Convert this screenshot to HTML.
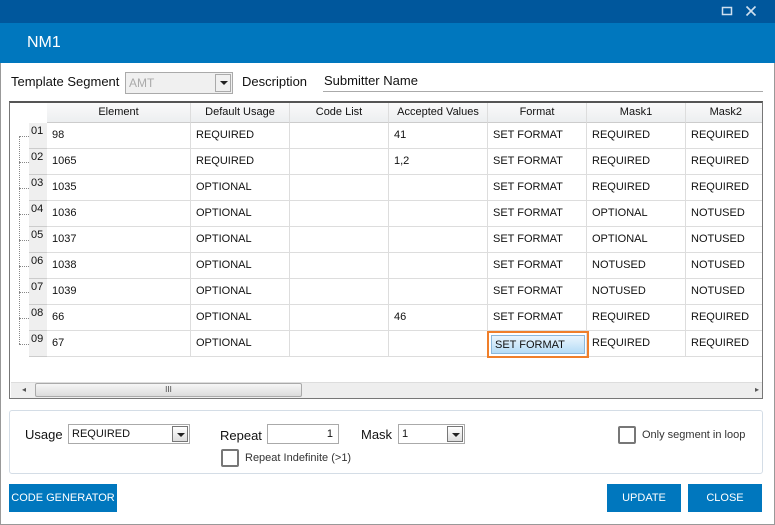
<!DOCTYPE html>
<html><head><style>
*{margin:0;padding:0;box-sizing:border-box}
body{width:775px;height:525px;overflow:hidden;background:#fff;font-family:"Liberation Sans",Tahoma,sans-serif;font-size:12px;color:#111;position:relative}
.a{position:absolute}
.t1{left:0;top:0;width:775px;height:23px;background:#00579c}
.t2{left:0;top:23px;width:775px;height:40px;background:#0077be;color:#fff;font-size:16px;padding:11px 0 0 27px}
.frame{left:0;top:63px;width:775px;height:462px;border:1px solid #999;border-top:none}
.cell{position:absolute;height:26px;border-right:1px solid #ddd;border-bottom:1px solid #ddd;font-size:11px;padding:6px 0 0 5px;white-space:nowrap}
.hd{position:absolute;top:103px;height:20px;background:linear-gradient(#fafafa,#eceef0);border-right:1px solid #ddd;border-bottom:1px solid #ccc;font-size:11px;text-align:center;padding-top:3px}
.rn{position:absolute;left:29px;width:18px;height:26px;background:#efefef;border-bottom:1px solid #ccc;font-size:11px;padding:2px 0 0 2px}
.btn{position:absolute;background:#0077be;color:#fff;font-size:11px;text-align:center;line-height:28px;height:28px}
.sel{position:absolute;border:1px solid #aaa;background:#fff;height:20px;font-size:11px;padding:3px 0 0 3px}
.dd{position:absolute;right:1px;top:1px;width:16px;height:16px;border:1px solid #777;background:linear-gradient(#fff,#ddd)}
.dd:after{content:"";position:absolute;left:4px;top:6px;border-left:4px solid transparent;border-right:4px solid transparent;border-top:4px solid #222}
.cb{position:absolute;width:18px;height:18px;border:2px solid #777;border-radius:2px;background:#fff}
</style></head><body>
<div class="a t1"></div>
<svg class="a" style="left:721px;top:5px" width="12" height="12"><rect x="1.5" y="2.5" width="9" height="7" fill="none" stroke="#cfe0ef" stroke-width="1.5"/></svg>
<svg class="a" style="left:745px;top:5px" width="12" height="12"><path d="M1.5 1.5L10.5 10.5M10.5 1.5L1.5 10.5" stroke="#cfe0ef" stroke-width="1.6"/></svg>
<div class="a t2">NM1</div>
<div class="a frame"></div>
<div class="a" style="left:11px;top:74px;font-size:13px">Template Segment</div>
<div class="sel" style="left:125px;top:72px;width:108px;height:22px;background:#f0f0f0;color:#aaa;font-size:12px">AMT<div class="dd" style="border-color:#aaa;height:18px;background:#f0f0f0"></div></div>
<div class="a" style="left:242px;top:74px;font-size:13px">Description</div>
<div class="a" style="left:324px;top:73px;font-size:13px">Submitter Name</div>
<div class="a" style="left:323px;top:91px;width:440px;height:1px;background:#aaa"></div>
<div class="a" style="left:9px;top:101px;width:754px;height:298px;border:1px solid #777;border-top:2px solid #555"></div>
<div class="hd" style="left:29px;width:18px;border-right:none;background:#fff;border-bottom:none"></div>
<div class="hd" style="left:47px;width:144px">Element</div>
<div class="hd" style="left:191px;width:99px">Default Usage</div>
<div class="hd" style="left:290px;width:99px">Code List</div>
<div class="hd" style="left:389px;width:99px">Accepted Values</div>
<div class="hd" style="left:488px;width:99px">Format</div>
<div class="hd" style="left:587px;width:99px">Mask1</div>
<div class="hd" style="left:686px;width:76px;text-align:right;padding-right:20px;border-right:none">Mask2</div>
<div class="a" style="left:19px;top:136px;width:0;height:208px;border-left:1px dotted #888"></div>
<div id="rows"></div>
<script>
var d=[["01","98","REQUIRED","41","REQUIRED","REQUIRED"],["02","1065","REQUIRED","1,2","REQUIRED","REQUIRED"],["03","1035","OPTIONAL","","REQUIRED","REQUIRED"],["04","1036","OPTIONAL","","OPTIONAL","NOTUSED"],["05","1037","OPTIONAL","","OPTIONAL","NOTUSED"],["06","1038","OPTIONAL","","NOTUSED","NOTUSED"],["07","1039","OPTIONAL","","NOTUSED","NOTUSED"],["08","66","OPTIONAL","46","REQUIRED","REQUIRED"],["09","67","OPTIONAL","","REQUIRED","REQUIRED"]];
var h="";
d.forEach(function(r,i){var y=123+i*26;
h+='<div class="a" style="left:19px;top:'+(y+13)+'px;width:10px;border-top:1px dotted #888"></div>';
h+='<div class="rn" style="top:'+y+'px">'+r[0]+'</div>';
var c=[[47,144,r[1]],[191,99,r[2]],[290,99,""],[389,99,r[3]],[488,99,i==8?"":"SET FORMAT"],[587,99,r[4]],[686,76,r[5]]];
c.forEach(function(k){h+='<div class="cell" style="left:'+k[0]+'px;top:'+y+'px;width:'+k[1]+'px'+(k[0]==686?';border-right:none':'')+'">'+k[2]+'</div>'});});
document.getElementById("rows").innerHTML=h;
</script>
<div class="a" style="left:487px;top:331px;width:102px;height:27px;border:2px solid #f07f2a;padding:2px"><div style="height:19px;border:1px solid #8cb8db;background:linear-gradient(#eaf5fd,#b5dcf6);font-size:11px;padding:3px 0 0 3px">SET FORMAT</div></div>
<div class="a" style="left:11px;top:382px;width:751px;height:16px;background:#eee;border-top:1px solid #ddd"></div>
<div class="a" style="left:22px;top:385px;font-size:8px;color:#555">◂</div>
<div class="a" style="left:755px;top:385px;font-size:8px;color:#555">▸</div>
<div class="a" style="left:35px;top:383px;width:267px;height:14px;border:1px solid #aaa;border-radius:2px;background:linear-gradient(#f6f6f6,#dcdcdc);text-align:center;font-size:8px;line-height:12px;color:#444">III</div>
<div class="a" style="left:9px;top:410px;width:754px;height:64px;border:1px solid #d4dde6;border-radius:3px"></div>
<div class="a" style="left:25px;top:427px;font-size:13px">Usage</div>
<div class="sel" style="left:68px;top:424px;width:122px">REQUIRED<div class="dd"></div></div>
<div class="a" style="left:220px;top:428px;font-size:13px">Repeat</div>
<div class="sel" style="left:267px;top:424px;width:72px;text-align:right;padding-right:5px">1</div>
<div class="a" style="left:361px;top:427px;font-size:13px">Mask</div>
<div class="sel" style="left:398px;top:424px;width:67px">1<div class="dd"></div></div>
<div class="cb" style="left:221px;top:449px"></div>
<div class="a" style="left:245px;top:452px;font-size:11px;color:#333">Repeat Indefinite (&gt;1)</div>
<div class="cb" style="left:618px;top:426px"></div>
<div class="a" style="left:642px;top:429px;font-size:11px;color:#333">Only segment in loop</div>
<div class="btn" style="left:9px;top:484px;width:108px">CODE GENERATOR</div>
<div class="btn" style="left:607px;top:484px;width:74px">UPDATE</div>
<div class="btn" style="left:688px;top:484px;width:74px">CLOSE</div>
</body></html>
